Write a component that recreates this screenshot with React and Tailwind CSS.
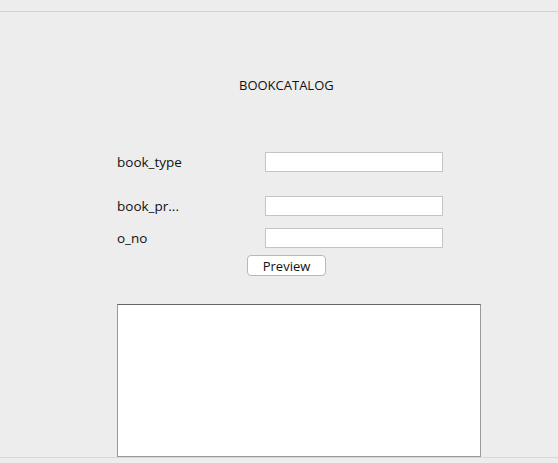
export default function App() {
  const font = { fontFamily: '"Open Sans", "Noto Sans", sans-serif' };
  return (
    <div className="w-[558px] h-[463px] bg-[#ededed] overflow-hidden flex flex-col text-[#111]" style={font}>
      <div className="h-[12px] shrink-0 border-b border-[#d2d2d2]" />
      <div className="h-[82px] shrink-0 flex items-end pl-[239px] text-[13px] leading-[18px]">
        BOOKCATALOG
      </div>
      <div className="h-[58px] shrink-0" />
      <div className="flex flex-col pl-[117px]">
        <div className="flex items-center h-[20px]">
          <div className="w-[148px] text-[13.5px]">book_type</div>
          <div className="w-[178px] h-[20px] bg-white border border-[#c4c4c4]" />
        </div>
        <div className="flex items-center h-[20px] mt-[24px]">
          <div className="w-[148px] text-[13.5px]">book_pr...</div>
          <div className="w-[178px] h-[20px] bg-white border border-[#c4c4c4]" />
        </div>
        <div className="flex items-center h-[20px] mt-[12px]">
          <div className="w-[148px] text-[13.5px]">o_no</div>
          <div className="w-[178px] h-[20px] bg-white border border-[#c4c4c4]" />
        </div>
        <div className="flex mt-[7px] pl-[130px]">
          <button className="w-[79px] h-[21px] bg-white border border-[#b8b8b8] rounded-[4px] text-[13px] leading-[18px] text-[#111]" style={font}>
            Preview
          </button>
        </div>
        <div className="w-[364px] h-[153px] mt-[28px] bg-white border border-[#999] border-t-[#666] shrink-0" />
      </div>
      <div className="border-t border-[#d8d8d8]" />
    </div>
  );
}
